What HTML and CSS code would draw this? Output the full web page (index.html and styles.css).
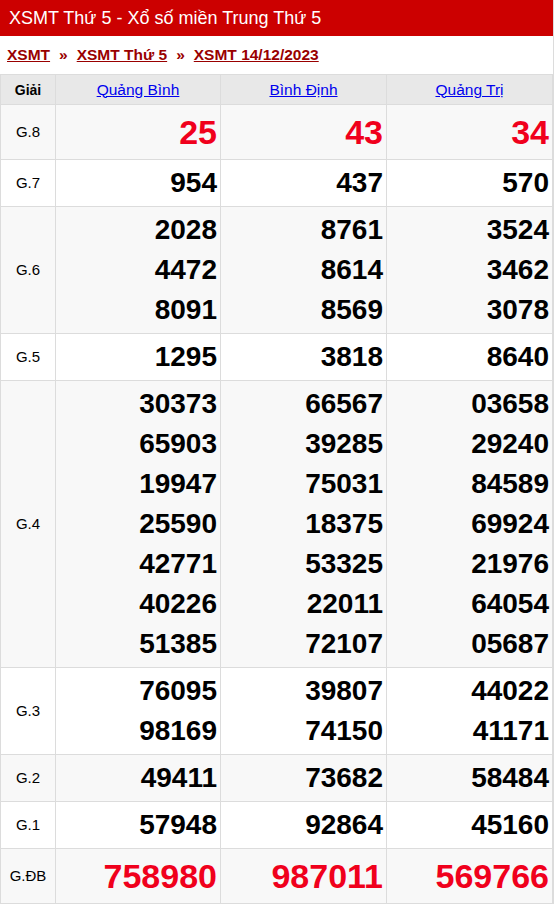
FILE: index.html
```html
<!DOCTYPE html>
<html lang="vi">
<head>
<meta charset="utf-8">
<title>XSMT Thứ 5</title>
<link rel="stylesheet" href="styles.css">
</head>
<body>
<div class="page">
  <h1 class="title">XSMT Thứ 5 - Xổ số miền Trung Thứ 5</h1>
  <div class="crumbs">
    <a href="#">XSMT</a><span class="sep">»</span><a href="#">XSMT Thứ 5</a><span class="sep">»</span><a href="#">XSMT 14/12/2023</a>
  </div>
  <table class="results">
    <colgroup><col class="c-label"><col class="c-first"><col class="c-prov"><col class="c-prov"></colgroup>
    <thead>
      <tr><th class="giai">Giải</th><th><a href="#">Quảng Bình</a></th><th><a href="#">Bình Định</a></th><th><a href="#">Quảng Trị</a></th></tr>
    </thead>
    <tbody>
      <tr class="alt big"><td class="lbl">G.8</td><td class="red">25</td><td class="red">43</td><td class="red">34</td></tr>
      <tr><td class="lbl">G.7</td><td>954</td><td>437</td><td>570</td></tr>
      <tr class="alt"><td class="lbl">G.6</td><td>2028<br>4472<br>8091</td><td>8761<br>8614<br>8569</td><td>3524<br>3462<br>3078</td></tr>
      <tr><td class="lbl">G.5</td><td>1295</td><td>3818</td><td>8640</td></tr>
      <tr class="alt"><td class="lbl">G.4</td><td>30373<br>65903<br>19947<br>25590<br>42771<br>40226<br>51385</td><td>66567<br>39285<br>75031<br>18375<br>53325<br>22011<br>72107</td><td>03658<br>29240<br>84589<br>69924<br>21976<br>64054<br>05687</td></tr>
      <tr><td class="lbl">G.3</td><td>76095<br>98169</td><td>39807<br>74150</td><td>44022<br>41171</td></tr>
      <tr class="alt"><td class="lbl">G.2</td><td>49411</td><td>73682</td><td>58484</td></tr>
      <tr><td class="lbl">G.1</td><td>57948</td><td>92864</td><td>45160</td></tr>
      <tr class="alt big"><td class="lbl">G.ĐB</td><td class="red">758980</td><td class="red">987011</td><td class="red">569766</td></tr>
    </tbody>
  </table>
</div>
</body>
</html>
```

FILE: styles.css
```css
html, body {
  margin: 0;
  padding: 0;
  background: #fff;
}
body {
  font-family: "Liberation Sans", Arial, sans-serif;
  color: #000;
}
.page {
  width: 553px;
  border-right: 1px solid #dcdcdc;
}
.title {
  margin: 0;
  height: 36px;
  line-height: 36px;
  background: #cc0000;
  color: #fff;
  font-size: 18px;
  font-weight: normal;
  padding: 0 9px;
}
.crumbs {
  height: 38px;
  line-height: 38px;
  padding: 0 7px;
  font-size: 15.5px;
  font-weight: bold;
}
.crumbs a {
  color: #990000;
  text-decoration: underline;
}
.crumbs .sep {
  color: #990000;
  margin: 0 9px;
}
.results {
  width: 553px;
  border-collapse: collapse;
  table-layout: fixed;
}
.c-label { width: 55px; }
.c-first { width: 165px; }
.c-prov { width: 166px; }
.results th, .results td {
  border: 1px solid #dcdcdc;
}
.results thead th {
  background: #e8e8e8;
  height: 29px;
  padding: 0;
  font-size: 15.5px;
  font-weight: normal;
  text-align: center;
}
.results thead th.giai {
  font-weight: bold;
  font-size: 14px;
}
.results thead a {
  color: #0000ee;
  text-decoration: underline;
}
.results td {
  padding: 3px 3px 3px 0;
  text-align: right;
  font-weight: bold;
  font-size: 28px;
  line-height: 40px;
}
.results td.lbl {
  text-align: center;
  font-weight: normal;
  font-size: 15px;
  line-height: 20px;
  padding: 0;
}
.results tr.alt td {
  background: #f8f8f8;
}
.results tr.big td {
  font-size: 34px;
  line-height: 48px;
}
.results tr.big td.lbl {
  font-size: 15px;
  line-height: 20px;
}
.results td.red {
  color: #f0001c;
}
```
